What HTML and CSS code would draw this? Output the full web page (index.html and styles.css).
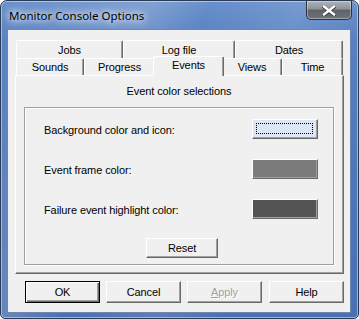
FILE: index.html
```html
<!DOCTYPE html>
<html lang="en">
<head>
    <meta charset="UTF-8">
    <title>Monitor Console Options</title>
    <link rel="stylesheet" href="styles.css">
</head>
<body>
    <div class="window">
        <header class="titlebar">
            <span class="title">Monitor Console Options</span>
            <button class="close" aria-label="Close">
                <svg width="14" height="11" viewBox="0 0 14 11">
                    <path d="M2 1.5 L12 9.5 M12 1.5 L2 9.5" stroke="#3a3d44" stroke-width="3.6" stroke-linecap="square" transform="translate(0,0.6)"/>
                    <path d="M2 1.5 L12 9.5 M12 1.5 L2 9.5" stroke="#ffffff" stroke-width="2.4" stroke-linecap="square"/>
                </svg>
            </button>
        </header>

        <div class="client">
            <div class="tabs">
                <div class="tab-row row-back">
                    <div class="tab">Jobs</div>
                    <div class="tab">Log file</div>
                    <div class="tab">Dates</div>
                </div>
                <div class="tab-row row-front">
                    <div class="tab">Sounds</div>
                    <div class="tab">Progress</div>
                    <div class="tab selected">Events</div>
                    <div class="tab">Views</div>
                    <div class="tab">Time</div>
                </div>
            </div>

            <div class="pane">
                <p class="pane-title">Event color selections</p>
                <div class="group">
                    <div class="color-row">
                        <span>Background color and icon:</span>
                        <button class="swatch swatch-bg"><span class="focus"></span></button>
                    </div>
                    <div class="color-row">
                        <span>Event frame color:</span>
                        <button class="swatch swatch-frame"></button>
                    </div>
                    <div class="color-row">
                        <span>Failure event highlight color:</span>
                        <button class="swatch swatch-fail"></button>
                    </div>
                    <button class="btn btn-reset">Reset</button>
                </div>
            </div>

            <div class="actions">
                <button class="btn btn-default">OK</button>
                <button class="btn">Cancel</button>
                <button class="btn" disabled><u>A</u>pply</button>
                <button class="btn">Help</button>
            </div>
        </div>
    </div>
</body>
</html>
```

FILE: styles.css
```css
* {
    margin: 0;
    padding: 0;
    box-sizing: border-box;
}

body {
    font-family: "Liberation Sans", Arial, sans-serif;
    font-size: 11px;
    letter-spacing: -0.1px;
    color: #000;
    background: #fff;
}

.window {
    width: 359px;
    height: 319px;
    padding: 0 7px 6px 6px;
    border: 1px solid #2c3b55;
    border-radius: 7px 7px 5px 5px;
    background:
        linear-gradient(115deg, rgba(255,255,255,0) 0%, rgba(255,255,255,0.16) 30%, rgba(255,255,255,0) 42%, rgba(255,255,255,0.1) 60%, rgba(255,255,255,0) 75%),
        linear-gradient(180deg, #6890cc 0%, #5880c0 12%, #4d76b8 60%, #4870b2 100%);
    box-shadow: inset 0 0 0 1px rgba(255,255,255,0.45);
    overflow: hidden;
}

.titlebar {
    height: 28px;
    display: flex;
    justify-content: space-between;
    align-items: flex-start;
}

.title {
    margin-top: 7px;
    padding-left: 2px;
    font-family: "Noto Sans", "Open Sans", sans-serif;
    font-size: 11.5px;
    letter-spacing: 0;
    color: #000;
    text-shadow: 0 0 6px #fff, 0 0 10px rgba(255,255,255,0.9), 0 0 14px rgba(255,255,255,0.7);
}

.close {
    width: 46px;
    height: 19px;
    margin-right: -1px;
    border: 1px solid #2f333b;
    border-top: none;
    border-radius: 0 0 5px 5px;
    background: linear-gradient(180deg, #b0b4bb 0%, #8d9198 45%, #5d6168 50%, #6f737a 100%);
    box-shadow: inset 0 0 0 1px rgba(255,255,255,0.35);
    display: flex;
    align-items: center;
    justify-content: center;
}

.client {
    height: 284px;
    padding: 10px 6px 9px 7px;
    background: #f0f0f0;
    border: 1px solid #6f86ad;
    display: flex;
    flex-direction: column;
}

.tabs {
    margin: 0 1px;
}

.tab-row {
    display: grid;
}

.row-back {
    height: 18px;
    grid-template-columns: 107px 112px 1fr;
}

.row-front {
    height: 17px;
    grid-template-columns: 68px 71px 67px 60px 1fr;
}

.tab {
    display: flex;
    align-items: center;
    justify-content: center;
    padding-bottom: 1px;
    background: #f0f0f0;
    border-top: 1px solid #fff;
    border-left: 1px solid #fff;
    border-right: 1px solid #696969;
    border-radius: 2px 2px 0 0;
    box-shadow: inset -1px 0 #a0a0a0;
}

.row-back .tab {
    height: 19px;
}

.tab.selected {
    position: relative;
    z-index: 1;
    margin: -2px -2px -1px -2px;
    padding-bottom: 3px;
}

.pane {
    height: 199px;
    background: #f0f0f0;
    border: 1px solid;
    border-color: #fff #696969 #696969 #fff;
    box-shadow: inset -1px -1px #a0a0a0;
    padding: 9px 9px 0 8px;
}

.pane-title {
    height: 13px;
    line-height: 13px;
    text-align: center;
    margin-bottom: 9px;
}

.group {
    width: 310px;
    height: 158px;
    border: 1px solid #a0a0a0;
    box-shadow: 1px 1px 0 #fff, inset 1px 1px 0 #fff;
    padding: 11px 15px 0 19px;
    display: flex;
    flex-direction: column;
    gap: 20px;
}

.color-row {
    display: flex;
    justify-content: space-between;
    align-items: center;
    height: 20px;
}

.color-row span {
    padding-top: 1px;
}

.swatch {
    position: relative;
    width: 66px;
    height: 20px;
    border: 1px solid;
    border-color: #fff #696969 #696969 #fff;
    box-shadow: inset -1px -1px #a0a0a0;
}

.swatch-bg { background: #dce6f4; }
.swatch-frame { background: #7b7b7b; }
.swatch-fail { background: #545454; }

.focus {
    position: absolute;
    top: 3px;
    left: 3px;
    right: 4px;
    bottom: 4px;
    border: 1px dotted #000;
}

.btn {
    font-family: "Liberation Sans", Arial, sans-serif;
    font-size: 11px;
    letter-spacing: -0.1px;
    color: #000;
    background: #f0f0f0;
    border: 1px solid;
    border-color: #fff #696969 #696969 #fff;
    box-shadow: inset -1px -1px #a0a0a0;
}

.btn-reset {
    align-self: center;
    width: 72px;
    height: 20px;
    margin-top: -1px;
    margin-left: 2px;
}

.actions {
    margin-top: 7px;
    display: flex;
    justify-content: flex-end;
    gap: 6px;
}

.actions .btn {
    width: 75px;
    height: 22px;
}

.actions .btn + .btn + .btn + .btn {
    margin-left: 1px;
}

.btn-default {
    border-color: #000;
    box-shadow: inset 1px 1px #fff, inset -1px -1px #696969, inset -2px -2px #a0a0a0;
}

.btn:disabled {
    color: #a0a0a0;
    text-shadow: 1px 1px 0 #fff;
}
```
